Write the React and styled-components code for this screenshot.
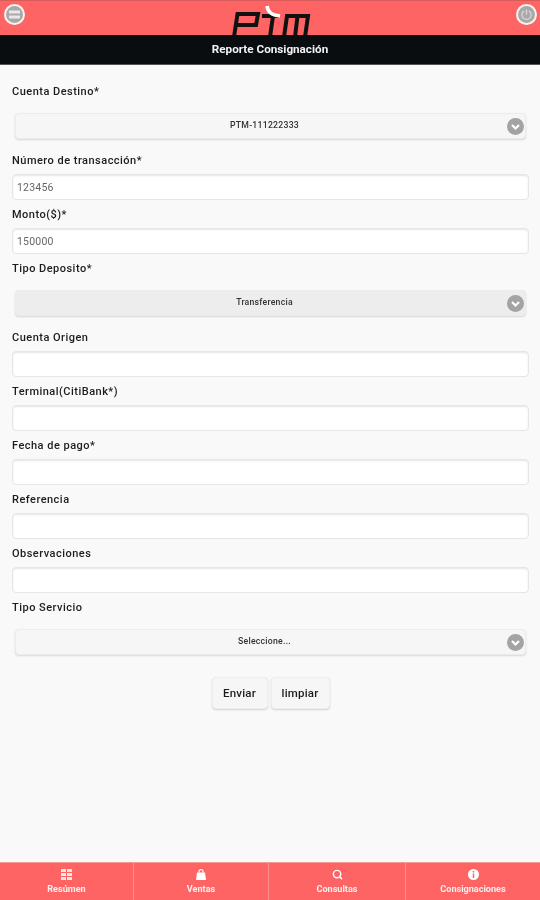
import React from "react";
import styled, { createGlobalStyle } from "styled-components";
import { LuSearch } from "react-icons/lu";

const Global = createGlobalStyle`
  html, body { margin: 0; padding: 0; background: #f9f9f9; }
  * { box-sizing: border-box; }
  body { font-family: Roboto, "Liberation Sans", sans-serif; }
`;

const Page = styled.div`
  width: 540px;
  height: 900px;
  display: flex;
  flex-direction: column;
  overflow: hidden;
  background: #f9f9f9;
  filter: blur(0.6px);
`;

const TopBar = styled.header`
  height: 35px;
  background: #ff6464;
  border-top: 1px solid #d95c5c;
  display: flex;
  align-items: flex-start;
  justify-content: space-between;
  padding: 3px 3px 0 4px;
`;

const RoundButton = styled.button`
  width: 21px;
  height: 21px;
  padding: 0;
  border: 2px solid #f7f3f0;
  border-radius: 50%;
  background: #a9a9a9;
  display: flex;
  align-items: center;
  justify-content: center;
`;

const Logo = styled.svg`
  width: 84px;
  height: 35px;
  margin: -1px 0 0 -3px;
  display: block;
`;

const TitleBar = styled.div`
  height: 30px;
  background: #0a0d10;
  color: #f2f2f2;
  border-bottom: 1px solid #555;
  display: flex;
  align-items: center;
  justify-content: center;
  font-size: 11.7px;
  font-weight: 700;
  padding-bottom: 1px;
`;

const Form = styled.main`
  flex: 1;
  padding: 19px 11px 0 12px;
  display: flex;
  flex-direction: column;
`;

const Label = styled.label`
  height: 16px;
  line-height: 16px;
  font-size: 11px;
  font-weight: 500;
  color: #1c1c1c;
  letter-spacing: 0.48px;
`;

const InputField = styled.div`
  display: flex;
  flex-direction: column;
  gap: 5px;
  margin-bottom: 7px;
`;

const Input = styled.input`
  width: 100%;
  height: 26px;
  padding: 0 4px;
  border: 1px solid #e6e6e6;
  border-radius: 4px;
  background: #fff;
  font: 400 10.5px Roboto, sans-serif;
  color: #666;
  letter-spacing: 0.2px;
  box-shadow: inset 0 1px 2px rgba(0, 0, 0, 0.1);
  outline: none;
`;

const SelectField = styled.div`
  display: flex;
  flex-direction: column;
  gap: 13px;
  margin-bottom: 14px;
`;

const SelectBox = styled.div`
  position: relative;
  height: 26px;
  margin: 0 3px 0 3px;
  border: 1px solid #ececec;
  border-radius: 4px;
  background: ${(p) => (p.$filled ? "#ededed" : "#f6f6f6")};
  box-shadow: 0 1px 2px rgba(0, 0, 0, 0.14);
  display: flex;
  align-items: center;
  justify-content: center;
  padding: 0 12px 2px 0;
  font-size: 8.7px;
  font-weight: 500;
  color: #333;
  letter-spacing: 0.25px;
`;

const SelectArrow = styled.span`
  position: absolute;
  right: 1px;
  top: 4px;
  width: 17px;
  height: 17px;
  border-radius: 50%;
  background: #a3a3a3;
  display: flex;
  align-items: center;
  justify-content: center;
`;

const Buttons = styled.div`
  display: flex;
  justify-content: center;
  gap: 3px;
  margin-top: 8px;
`;

const Button = styled.button`
  width: ${(p) => p.$w}px;
  height: 32px;
  padding: 0;
  border: 1px solid #eee;
  border-radius: 4px;
  background: #f6f6f6;
  box-shadow: 0 1px 2px rgba(0, 0, 0, 0.16);
  font: 500 11.5px Roboto, sans-serif;
  color: #1c1c1c;
  letter-spacing: 0.2px;
`;

const Footer = styled.nav`
  height: 38px;
  background: #ff6464;
  border-top: 1px solid #f49a96;
  display: grid;
  grid-template-columns: 133px 135px 137px 135px;
`;

const Tab = styled.div`
  border-left: ${(p) => (p.$first ? "none" : "1px solid #fb8f8c")};
  color: #fbeeee;
  display: flex;
  flex-direction: column;
  align-items: center;
  padding-top: 5px;
  gap: 4px;
  font-size: 9.1px;
  font-weight: 700;
  line-height: 11px;
`;

const TabIcon = styled.span`
  height: 12px;
  display: flex;
  align-items: center;
  justify-content: center;
`;

const Chevron = () => (
  <svg width="11" height="11" viewBox="0 0 11 11">
    <path d="M2 4l3.5 3.5L9 4" fill="none" stroke="#fff" strokeWidth="2.2" />
  </svg>
);

const Select = ({ label, value, filled }) => (
  <SelectField>
    <Label>{label}</Label>
    <SelectBox $filled={filled}>
      {value}
      <SelectArrow><Chevron /></SelectArrow>
    </SelectBox>
  </SelectField>
);

const Field = ({ label, value }) => (
  <InputField>
    <Label>{label}</Label>
    <Input defaultValue={value} />
  </InputField>
);

export default function App() {
  return (
    <Page>
      <Global />
      <TopBar>
        <RoundButton aria-label="menu">
          <svg width="13" height="11" viewBox="0 0 13 11">
            <path d="M1 3h11M1 8h11" stroke="#e8e8e8" strokeWidth="3" />
          </svg>
        </RoundButton>
        <Logo viewBox="0 0 84 35">
          <path d="M7 34L10.5 11H31L29 22H9" fill="none" stroke="#111" strokeWidth="4" />
          <path d="M35 13H52M46 13L43 34" fill="none" stroke="#111" strokeWidth="4" />
          <path d="M40 3c1 6 4 9 13 10" fill="none" stroke="#fff" strokeWidth="3.6" />
          <path d="M57 34L60 13H81L78 34M70.5 13L68 34" fill="none" stroke="#111" strokeWidth="4" />
        </Logo>
        <RoundButton aria-label="salir">
          <svg width="13" height="13" viewBox="0 0 13 13">
            <path d="M4 3a4.6 4.6 0 1 0 5 0M6.5 1.5v5" fill="none" stroke="#d8d8d8" strokeWidth="1.3" />
          </svg>
        </RoundButton>
      </TopBar>
      <TitleBar>Reporte Consignación</TitleBar>
      <Form>
        <Select label="Cuenta Destino*" value="PTM-111222333" />
        <Field label="Número de transacción*" value="123456" />
        <Field label="Monto($)*" value="150000" />
        <Select label="Tipo Deposito*" value="Transferencia" filled />
        <Field label="Cuenta Origen" />
        <Field label="Terminal(CitiBank*)" />
        <Field label="Fecha de pago*" />
        <Field label="Referencia" />
        <Field label="Observaciones" />
        <Select label="Tipo Servicio" value="Seleccione..." />
        <Buttons>
          <Button $w={56}>Enviar</Button>
          <Button $w={59}>limpiar</Button>
        </Buttons>
      </Form>
      <Footer>
        <Tab $first>
          <TabIcon>
            <svg width="11" height="11" viewBox="0 0 11 11">
              <path d="M0 0h5v3H0zM6 0h5v3H6zM0 4h5v3H0zM6 4h5v3H6zM0 8h5v3H0zM6 8h5v3H6z" fill="#f5e6e6" />
            </svg>
          </TabIcon>
          Resúmen
        </Tab>
        <Tab>
          <TabIcon>
            <svg width="10" height="11" viewBox="0 0 10 11">
              <path d="M3 3.5V2.6a2 2 0 0 1 4 0v.9" fill="none" stroke="#fff" strokeWidth="1.1" />
              <path d="M1 3.5h8l1 7.5H0z" fill="#fff" />
            </svg>
          </TabIcon>
          Ventas
        </Tab>
        <Tab>
          <TabIcon><LuSearch size={11} strokeWidth={3.2} color="#fff" /></TabIcon>
          Consultas
        </Tab>
        <Tab>
          <TabIcon>
            <svg width="11" height="11" viewBox="0 0 11 11">
              <circle cx="5.5" cy="5.5" r="5.5" fill="#fff" />
              <path d="M5.5 2v1.4M5.5 4.6V9" stroke="#ff6464" strokeWidth="1.5" />
            </svg>
          </TabIcon>
          Consignaciones
        </Tab>
      </Footer>
    </Page>
  );
}
